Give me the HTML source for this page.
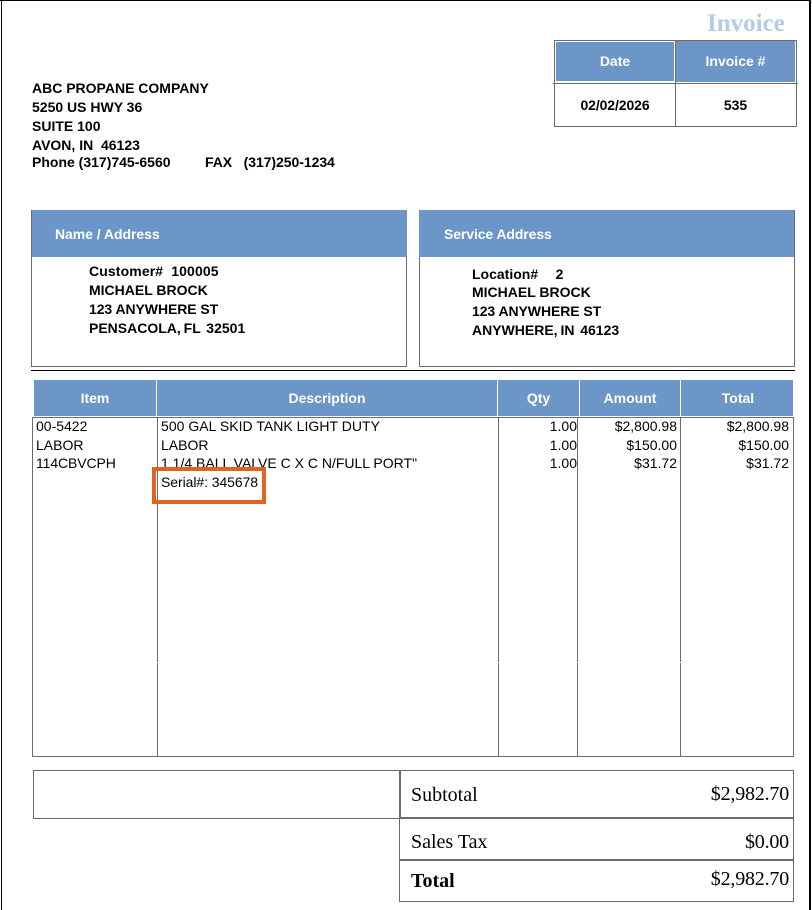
<!DOCTYPE html>
<html><head><meta charset="utf-8"><style>
html,body{margin:0;padding:0;background:#fff}
#p{position:relative;width:812px;height:910px;overflow:hidden;background:#fff;font-family:"Liberation Sans",Arial,sans-serif;color:#000}
#p div{position:absolute;white-space:pre;box-sizing:border-box}
.k{background:#000}
.g{background:#6d6a6e}
.b{background:#6c96c8}
.w{background:#fff}
.h{color:#fff;font-weight:bold;font-size:14px;line-height:16px;text-align:center}
.t{font-weight:bold;font-size:14px;line-height:16px}
.c{font-size:14px;line-height:16px}
.r{text-align:right}
.s{font-family:"Liberation Serif","Times New Roman",serif;font-size:20px;line-height:22px}
.m{letter-spacing:-.2px}
</style></head><body><div id="p">
<div class="k" style="left:0;top:0;width:811px;height:1px"></div>
<div class="k" style="left:1px;top:0;width:1px;height:910px"></div>
<div class="k" style="left:809px;top:0;width:2px;height:910px"></div>

<div style="left:707px;top:10px;font-family:'Liberation Serif',serif;font-weight:bold;font-size:25px;line-height:28px;color:#b3cbe3">Invoice</div>

<div style="left:554px;top:40px;width:243px;height:87px;border:1px solid #6d6a6e"></div>
<div class="b" style="left:556px;top:42px;width:118px;height:39px"></div>
<div class="b" style="left:676px;top:41px;width:119px;height:41px"></div>
<div class="g" style="left:675px;top:40px;width:1px;height:87px"></div>
<div class="g" style="left:553px;top:83px;width:245px;height:1px"></div>
<div class="h" style="left:556px;top:53px;width:118px">Date</div>
<div class="h" style="left:676px;top:53px;width:119px">Invoice #</div>
<div class="t" style="left:556px;top:97px;width:118px;text-align:center;letter-spacing:-.1px">02/02/2026</div>
<div class="t" style="left:676px;top:97px;width:119px;text-align:center">535</div>

<div class="t" style="left:32px;top:80px">ABC PROPANE COMPANY</div>
<div class="t" style="left:32px;top:99px">5250 US HWY 36</div>
<div class="t" style="left:32px;top:118px">SUITE 100</div>
<div class="t" style="left:32px;top:137px">AVON, IN  46123</div>
<div class="t" style="left:32px;top:154px">Phone (317)745-6560</div>
<div class="t" style="left:205px;top:154px;letter-spacing:-.05px">FAX   (317)250-1234</div>

<div style="left:31px;top:210px;width:376px;height:157px;border:1px solid #6d6a6e"></div>
<div class="b" style="left:32px;top:210px;width:375px;height:47px"></div>
<div class="h" style="left:55px;top:226px;letter-spacing:-.05px">Name / Address</div>
<div class="t" style="left:89px;top:263px;letter-spacing:.12px">Customer#  100005</div>
<div class="t" style="left:89px;top:282px">MICHAEL BROCK</div>
<div class="t" style="left:89px;top:301px;letter-spacing:-.07px">123 ANYWHERE ST</div>
<div class="t" style="left:89px;top:320px;word-spacing:-1px">PENSACOLA, FL  32501</div>

<div style="left:419px;top:210px;width:376px;height:157px;border:1px solid #6d6a6e"></div>
<div class="b" style="left:419px;top:210px;width:375px;height:47px"></div>
<div class="h" style="left:444px;top:226px;letter-spacing:-.1px">Service Address</div>
<div class="t" style="left:472px;top:266px;word-spacing:.5px">Location#    2</div>
<div class="t" style="left:472px;top:284px">MICHAEL BROCK</div>
<div class="t" style="left:472px;top:303px;letter-spacing:-.07px">123 ANYWHERE ST</div>
<div class="t" style="left:472px;top:322px;word-spacing:-1px">ANYWHERE, IN  46123</div>

<div class="k" style="left:31px;top:370px;width:764px;height:1px"></div>

<div class="b" style="left:34px;top:380px;width:759px;height:36px"></div>
<div class="w" style="left:156px;top:379px;width:1px;height:38px"></div>
<div class="w" style="left:497px;top:379px;width:1px;height:38px"></div>
<div class="w" style="left:579px;top:379px;width:1px;height:38px"></div>
<div class="w" style="left:680px;top:379px;width:1px;height:38px"></div>
<div class="h" style="left:34px;top:390px;width:122px">Item</div>
<div class="h" style="left:157px;top:390px;width:340px">Description</div>
<div class="h" style="left:498px;top:390px;width:81px">Qty</div>
<div class="h" style="left:580px;top:390px;width:100px">Amount</div>
<div class="h" style="left:682px;top:390px;width:112px">Total</div>

<div style="left:32px;top:417px;width:762px;height:340px;border:1px solid #6d6a6e"></div>
<div class="g" style="left:157px;top:417px;width:1px;height:340px"></div>
<div class="g" style="left:498px;top:417px;width:1px;height:340px"></div>
<div class="g" style="left:577px;top:417px;width:1px;height:340px"></div>
<div class="g" style="left:680px;top:417px;width:1px;height:340px"></div>
<div class="w" style="left:157px;top:662px;width:1px;height:1px"></div>
<div class="w" style="left:498px;top:662px;width:1px;height:1px"></div>
<div class="w" style="left:577px;top:662px;width:1px;height:1px"></div>
<div class="w" style="left:680px;top:662px;width:1px;height:1px"></div>

<div class="c" style="left:36px;top:418px">00-5422</div>
<div class="c" style="left:36px;top:437px">LABOR</div>
<div class="c" style="left:36px;top:455px;letter-spacing:-.1px">114CBVCPH</div>
<div class="c" style="left:161px;top:418px;letter-spacing:.03px">500 GAL SKID TANK LIGHT DUTY</div>
<div class="c" style="left:161px;top:437px">LABOR</div>
<div class="c" style="left:161px;top:455px">1 1/4 BALL VALVE C X C N/FULL PORT"</div>
<div class="c" style="left:161px;top:474px;letter-spacing:-.07px">Serial#: 345678</div>
<div class="c r" style="left:500px;width:77px;top:418px">1.00</div>
<div class="c r" style="left:500px;width:77px;top:437px">1.00</div>
<div class="c r" style="left:500px;width:77px;top:455px">1.00</div>
<div class="c r" style="left:580px;width:97px;top:418px">$2,800.98</div>
<div class="c r" style="left:580px;width:97px;top:437px">$150.00</div>
<div class="c r" style="left:580px;width:97px;top:455px">$31.72</div>
<div class="c r" style="left:682px;width:107px;top:418px">$2,800.98</div>
<div class="c r" style="left:682px;width:107px;top:437px">$150.00</div>
<div class="c r" style="left:682px;width:107px;top:455px">$31.72</div>

<div style="left:152px;top:467px;width:114px;height:37px;border:4px solid #e0641f"></div>

<div style="left:33px;top:770px;width:368px;height:49px;border:1px solid #6d6a6e"></div>
<div style="left:399px;top:770px;width:395px;height:132px;border:1px solid #6d6a6e"></div>
<div class="g" style="left:399px;top:770px;width:2px;height:48px"></div>
<div class="g" style="left:400px;top:817px;width:394px;height:2px"></div>
<div class="g" style="left:399px;top:859px;width:395px;height:2px"></div>
<div class="s" style="left:411px;top:784px">Subtotal</div>
<div class="s r m" style="left:600px;width:189px;top:783px">$2,982.70</div>
<div class="s" style="left:411px;top:831px">Sales Tax</div>
<div class="s r m" style="left:600px;width:189px;top:831px">$0.00</div>
<div class="s" style="left:411px;top:870px;font-weight:bold">Total</div>
<div class="s r m" style="left:600px;width:189px;top:868px">$2,982.70</div>
</div></body></html>
